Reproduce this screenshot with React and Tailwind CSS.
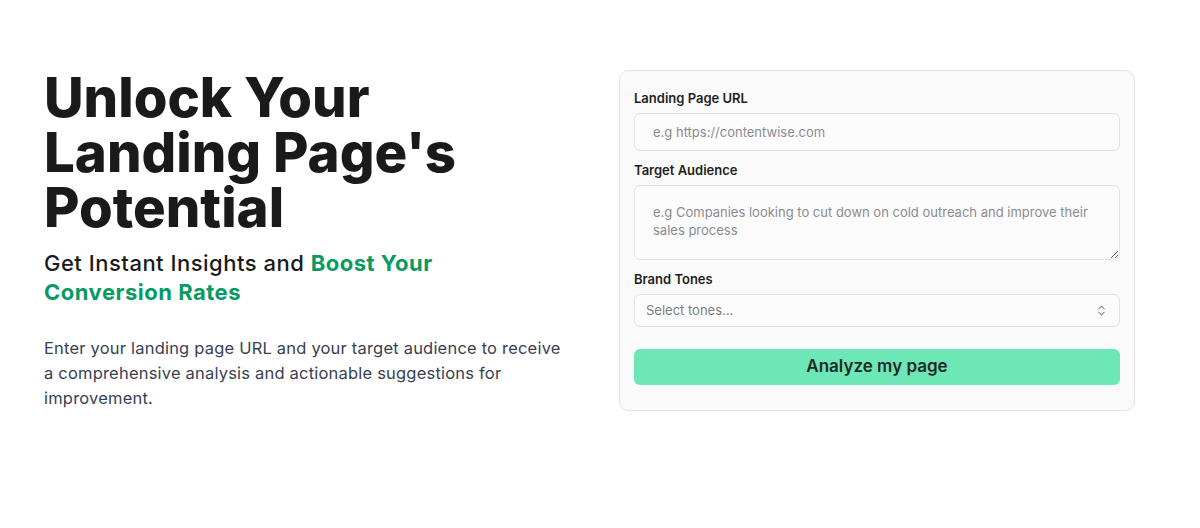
import React from 'react';
import { ChevronsUpDown } from 'lucide-react';

const Field = ({ label, children }) => (
    <div className="flex flex-col gap-[7px]">
        <label className="text-[13px] font-semibold leading-[16px] text-[#1f1f1f]">{label}</label>
        {children}
    </div>
);

const App = () => {
    return (
        <div className="min-h-[528px] bg-white font-['Inter',sans-serif] text-[#1a1a1a]">
            <div className="grid grid-cols-[1fr_516px] gap-[48px] pl-[44px] pr-[65px] pt-[70px]">
                {/* Left: hero copy */}
                <div className="flex flex-col">
                    <h1 className="text-[54.5px] font-extrabold leading-[55px] text-[#1a1a1a]">
                        Unlock Your<br />Landing Page's<br />Potential
                    </h1>
                    <h2 className="mt-[14px] max-w-[420px] text-[22px] font-medium leading-[29px] tracking-[0.5px] text-[#1a1a1a]">
                        Get Instant Insights and <span className="font-bold text-[#079a62]">Boost Your Conversion Rates</span>
                    </h2>
                    <p className="mt-[29px] max-w-[520px] text-[16.5px] leading-[25px] tracking-[0.2px] text-[#374151]">
                        Enter your landing page URL and your target audience to receive a comprehensive analysis and actionable suggestions for improvement.
                    </p>
                </div>

                {/* Right: form card */}
                <div className="flex flex-col rounded-[10px] border border-[#e2e2e6] bg-[#fafafa] px-[14px] pb-[25px] pt-[19px]">
                    <div className="flex flex-col gap-[11px]">
                        <Field label="Landing Page URL">
                            <input
                                type="text"
                                placeholder="e.g https://contentwise.com"
                                className="h-[38px] w-full rounded-[6px] border border-[#e2e2e6] bg-[#fcfcfc] px-[18px] text-[13px] outline-none placeholder:text-[#8b8b8f]"
                            />
                        </Field>
                        <Field label="Target Audience">
                            <textarea
                                rows={2}
                                placeholder="e.g Companies looking to cut down on cold outreach and improve their sales process"
                                className="block h-[75px] w-full resize-y rounded-[6px] border border-[#e2e2e6] bg-[#fcfcfc] px-[18px] pt-[17px] text-[13px] leading-[18px] outline-none placeholder:text-[#8b8b8f]"
                            />
                        </Field>
                        <Field label="Brand Tones">
                            <button className="flex h-[33px] w-full items-center justify-between rounded-[6px] border border-[#e2e2e6] bg-[#fcfcfc] px-[11px] text-[13px] text-[#7c7c80]">
                                <span>Select tones...</span>
                                <ChevronsUpDown size={13} className="text-[#8b8b8f]" />
                            </button>
                        </Field>
                    </div>
                    <button className="mt-[22px] h-[36px] w-full rounded-[6px] bg-[#6ee7b7] text-[17px] font-semibold text-[#1e2a26]">
                        Analyze my page
                    </button>
                </div>
            </div>
        </div>
    );
};

export default App;
